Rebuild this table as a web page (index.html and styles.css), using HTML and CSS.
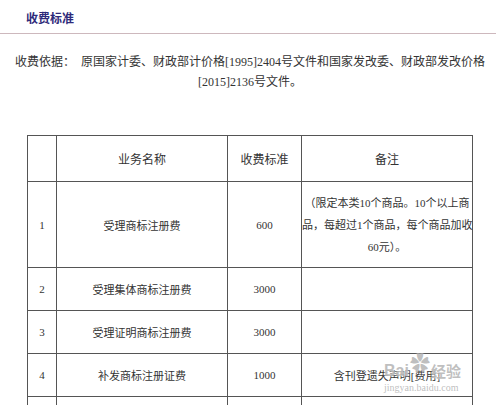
FILE: index.html
```html
<!DOCTYPE html>
<html lang="zh-CN">
<head>
<meta charset="utf-8">
<title>收费标准</title>
<link rel="stylesheet" href="styles.css">
</head>
<body>
<div class="page">
  <div class="header"><span class="title">收费标准</span></div>
  <p class="basis">收费依据：&nbsp;&nbsp;原国家计委、财政部计价格[1995]2404号文件和国家发改委、财政部发改价格<br>[2015]2136号文件。</p>
  <table class="fees">
    <colgroup>
      <col class="c-no">
      <col class="c-name">
      <col class="c-fee">
      <col class="c-note">
    </colgroup>
    <tr class="head">
      <th></th>
      <th>业务名称</th>
      <th>收费标准</th>
      <th>备注</th>
    </tr>
    <tr class="tall">
      <td>1</td>
      <td>受理商标注册费</td>
      <td>600</td>
      <td class="note">（限定本类10个商品。10个以上商<br>品，每超过1个商品，每个商品加收<br>60元）。</td>
    </tr>
    <tr>
      <td>2</td>
      <td>受理集体商标注册费</td>
      <td>3000</td>
      <td></td>
    </tr>
    <tr>
      <td>3</td>
      <td>受理证明商标注册费</td>
      <td>3000</td>
      <td></td>
    </tr>
    <tr>
      <td>4</td>
      <td>补发商标注册证费</td>
      <td>1000</td>
      <td>含刊登遗失声明[费用]</td>
    </tr>
    <tr>
      <td></td>
      <td></td>
      <td></td>
      <td></td>
    </tr>
  </table>
  <div class="watermark">
    <div class="wm-top"><span class="wm-bai">Bai</span><span class="wm-paw">&#10047;</span><span class="wm-jy">经验</span></div>
    <div class="wm-url">jingyan.baidu.com</div>
  </div>
</div>
</body>
</html>
```
FILE: styles.css
```css
html, body {
  margin: 0;
  padding: 0;
  background: #ffffff;
}
body {
  font-family: "Liberation Serif", "Noto Sans CJK SC", sans-serif;
  color: #333333;
  width: 500px;
  height: 405px;
  overflow: hidden;
}
.page {
  position: relative;
  height: 405px;
}
.header {
  padding: 11px 0 8px 26px;
  margin-right: 4px;
  border-bottom: 1px solid #cdb8bd;
  line-height: 14px;
}
.title {
  font-family: "Noto Sans CJK SC", sans-serif;
  font-size: 12px;
  font-weight: bold;
  color: #2e2a7a;
}
.basis {
  margin: 18px 0 0 0;
  padding: 0 6px;
  font-size: 12px;
  line-height: 20px;
  text-align: center;
  white-space: nowrap;
  color: #333333;
}
.fees {
  margin: 43px 0 0 27px;
  border-collapse: collapse;
  table-layout: fixed;
  width: 445px;
  color: #333333;
}
.c-no { width: 29px; }
.c-name { width: 171px; }
.c-fee { width: 74px; }
.c-note { width: 171px; }
.fees th, .fees td {
  border: 1px solid #555555;
  padding: 0;
  text-align: center;
  vertical-align: middle;
}
.fees th {
  font-weight: normal;
  font-size: 12px;
  height: 45px;
}
.fees td {
  font-size: 11px;
  height: 42px;
}
.fees tr.tall td {
  height: 85px;
}
.fees td.note {
  line-height: 22px;
  white-space: nowrap;
}
.watermark {
  position: absolute;
  left: 384px;
  top: 352px;
  width: 92px;
  color: rgba(170, 170, 170, 0.75);
  text-shadow: 0 0 2px #ffffff;
  pointer-events: none;
}
.wm-top {
  display: flex;
  align-items: flex-end;
  height: 28px;
}
.wm-bai {
  font-family: "Liberation Sans", sans-serif;
  font-size: 16px;
  font-weight: bold;
  line-height: 18px;
}
.wm-paw {
  font-size: 20px;
  line-height: 24px;
  margin: 0 1px 4px 1px;
}
.wm-jy {
  font-family: "Noto Sans CJK SC", sans-serif;
  font-size: 15px;
  font-weight: bold;
  line-height: 18px;
}
.wm-url {
  font-family: "Liberation Serif", serif;
  font-size: 10px;
  line-height: 12px;
  margin-top: 2px;
}
```
